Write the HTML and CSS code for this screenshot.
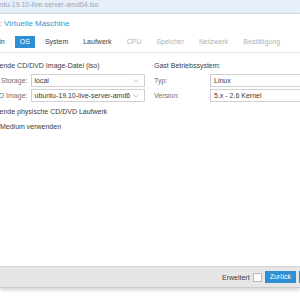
FILE: index.html
```html
<!DOCTYPE html>
<html>
<head>
<meta charset="utf-8">
<link rel="stylesheet" href="styles.css">
</head>
<body>
<div class="topbar"><span class="crumb">ubuntu-19.10-live-server-amd64.iso</span></div>
<div class="window">
  <div class="title">Erstelle: Virtuelle Maschine</div>
  <div class="tabs">
    <span class="tab">Allgemein</span>
    <span class="tab active">OS</span>
    <span class="tab">System</span>
    <span class="tab">Laufwerk</span>
    <span class="tab off">CPU</span>
    <span class="tab off">Speicher</span>
    <span class="tab off">Netzwerk</span>
    <span class="tab off">Bestätigung</span>
  </div>
  <div class="content">
    <div class="col left">
      <div class="row">Verwende CD/DVD Image-Datei (iso)</div>
      <div class="row field">
        <span class="label">Storage:</span>
        <span class="select">local<svg class="chev" width="6" height="4" viewBox="0 0 6 4"><path d="M0.5 0.5 L3 3 L5.5 0.5" fill="none" stroke="#b5b5b5" stroke-width="0.8"/></svg></span>
      </div>
      <div class="row field">
        <span class="label">ISO Image:</span>
        <span class="select">ubuntu-19.10-live-server-amd6<svg class="chev" width="6" height="4" viewBox="0 0 6 4"><path d="M0.5 0.5 L3 3 L5.5 0.5" fill="none" stroke="#b5b5b5" stroke-width="0.8"/></svg></span>
      </div>
      <div class="row gapped">Verwende physische CD/DVD Laufwerk</div>
      <div class="row">Kein Medium verwenden</div>
    </div>
    <div class="col right">
      <div class="row">Gast Betriebssystem:</div>
      <div class="row field">
        <span class="label rlabel">Typ:</span>
        <span class="select wide">Linux</span>
      </div>
      <div class="row field">
        <span class="label rlabel">Version:</span>
        <span class="select wide">5.x - 2.6 Kernel</span>
      </div>
    </div>
  </div>
  <div class="footer">
    <span class="adv">Erweitert</span>
    <span class="check"></span>
    <span class="btn back">Zurück</span>
    <span class="btn">Weiter</span>
  </div>
</div>
</body>
</html>
```
FILE: styles.css
```css
html, body {
  margin: 0;
  padding: 0;
  width: 300px;
  height: 300px;
  overflow: hidden;
  background: #ffffff;
  font-family: "Liberation Sans", Arial, sans-serif;
  font-size: 7px;
  color: #3c3c3c;
}

.topbar {
  height: 13px;
  background: #e7eff9;
  border-bottom: 1px solid #d3dbe4;
  line-height: 9px;
  white-space: nowrap;
  overflow: hidden;
}

.crumb {
  display: inline-block;
  margin-left: -12px;
  color: #97a7bc;
}

.window {
  height: 274px;
  display: flex;
  flex-direction: column;
  background: #ffffff;
  box-shadow: 0 2px 4px rgba(0, 0, 0, 0.18);
  overflow: hidden;
}

.title {
  margin-top: 5px;
  margin-left: -27px;
  height: 10px;
  line-height: 10px;
  font-size: 8px;
  color: #3a8fcf;
  white-space: nowrap;
}

.tabs {
  display: flex;
  gap: 5px;
  margin-top: 7px;
  margin-left: -31px;
  padding-bottom: 4px;
  border-bottom: 1px solid #e3e3e3;
  white-space: nowrap;
}

.tab {
  height: 12px;
  line-height: 12px;
  padding: 0 5px;
  color: #404040;
}

.tab.active {
  background: #2f8fd5;
  color: #ffffff;
}

.tab.off {
  color: #b3b3b3;
}

.content {
  display: flex;
  gap: 9px;
  padding-top: 5px;
  white-space: nowrap;
}

.col.left {
  margin-left: -16px;
  width: 161px;
  flex: none;
}

.col.right {
  flex: none;
  width: 200px;
}

.row {
  height: 15px;
  line-height: 15px;
}

.row.gapped {
  margin-top: 1px;
}

.field {
  display: flex;
  align-items: center;
}

.label {
  flex: none;
  width: 43.5px;
  padding-right: 3px;
  text-align: right;
  color: #6e6e6e;
}

.rlabel {
  width: 56px;
  padding-right: 0;
  text-align: left;
}

.select {
  flex: 1;
  height: 11px;
  line-height: 11px;
  border: 1px solid #d0d0d0;
  padding-left: 3px;
  display: flex;
  align-items: center;
  justify-content: space-between;
  color: #3a3a3a;
  overflow: hidden;
}

.select.wide {
  flex: none;
  width: 140px;
}

.chev {
  flex: none;
  margin-right: 5px;
}

.footer {
  margin-top: auto;
  height: 20px;
  background: #e6e6e6;
  border-top: 1px solid #d6d6d6;
  border-bottom: 1px solid #cbcbcb;
  display: flex;
  align-items: center;
  padding-left: 222px;
  white-space: nowrap;
}

.adv {
  color: #404040;
}

.check {
  flex: none;
  width: 7px;
  height: 7px;
  margin-left: 3px;
  border: 1px solid #b8b8b8;
  background: #ffffff;
}

.btn {
  flex: none;
  height: 12px;
  line-height: 12px;
  padding: 0 5px;
  margin-left: 3px;
  background: #2f8fd5;
  color: #ffffff;
}

.btn.back {
  width: 21px;
  text-align: center;
}
```
